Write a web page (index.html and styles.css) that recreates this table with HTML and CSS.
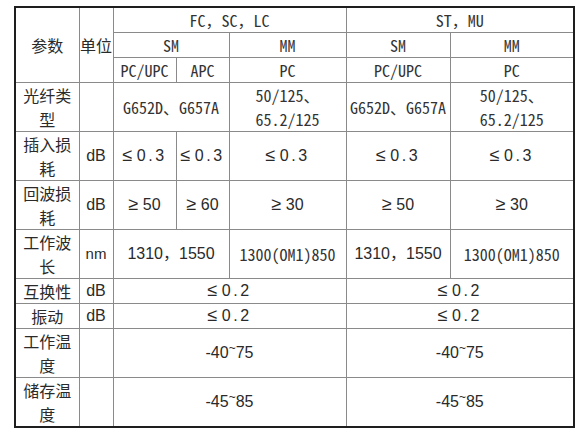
FILE: index.html
```html
<!DOCTYPE html>
<html lang="zh-CN">
<head>
<meta charset="utf-8">
<title>参数表</title>
<link rel="stylesheet" href="styles.css">
</head>
<body>
<table class="spec">
  <colgroup>
    <col class="c1"><col class="c2"><col class="c3"><col class="c4"><col class="c5"><col class="c6"><col class="c7">
  </colgroup>
  <tbody>
    <tr>
      <td rowspan="3">参数</td>
      <td rowspan="3">单位</td>
      <td colspan="3" class="mono">FC，SC，LC</td>
      <td colspan="2" class="mono">ST，MU</td>
    </tr>
    <tr>
      <td colspan="2" class="mono">SM</td>
      <td class="mono">MM</td>
      <td class="mono">SM</td>
      <td class="mono">MM</td>
    </tr>
    <tr>
      <td class="mono">PC/UPC</td>
      <td class="mono">APC</td>
      <td class="mono">PC</td>
      <td class="mono">PC/UPC</td>
      <td class="mono">PC</td>
    </tr>
    <tr>
      <td>光纤类型</td>
      <td></td>
      <td colspan="2" class="mono">G652D、G657A</td>
      <td class="mono">50/125、<br>65.2/125</td>
      <td class="mono">G652D、G657A</td>
      <td class="mono">50/125、<br>65.2/125</td>
    </tr>
    <tr>
      <td>插入损耗</td>
      <td class="num">dB</td>
      <td class="num"><span class="rel">≤</span> <span class="sp">0.3</span></td>
      <td class="num"><span class="rel">≤</span> <span class="sp">0.3</span></td>
      <td class="num"><span class="rel">≤</span> <span class="sp">0.3</span></td>
      <td class="num"><span class="rel">≤</span> <span class="sp">0.3</span></td>
      <td class="num"><span class="rel">≤</span> <span class="sp">0.3</span></td>
    </tr>
    <tr>
      <td>回波损耗</td>
      <td class="num">dB</td>
      <td class="num"><span class="rel">≥</span> 50</td>
      <td class="num"><span class="rel">≥</span> 60</td>
      <td class="num"><span class="rel">≥</span> 30</td>
      <td class="num"><span class="rel">≥</span> 50</td>
      <td class="num"><span class="rel">≥</span> 30</td>
    </tr>
    <tr>
      <td>工作波长</td>
      <td class="num small">nm</td>
      <td colspan="2" class="num">1310，1550</td>
      <td class="mono">1300(OM1)850</td>
      <td class="num">1310，1550</td>
      <td class="mono">1300(OM1)850</td>
    </tr>
    <tr>
      <td>互换性</td>
      <td class="num">dB</td>
      <td colspan="3" class="num"><span class="rel">≤</span> <span class="sp">0.2</span></td>
      <td colspan="2" class="num"><span class="rel">≤</span> <span class="sp">0.2</span></td>
    </tr>
    <tr>
      <td>振动</td>
      <td class="num">dB</td>
      <td colspan="3" class="num"><span class="rel">≤</span> <span class="sp">0.2</span></td>
      <td colspan="2" class="num"><span class="rel">≤</span> <span class="sp">0.2</span></td>
    </tr>
    <tr>
      <td>工作温度</td>
      <td></td>
      <td colspan="3" class="num">-40<span class="tilde">~</span>75</td>
      <td colspan="2" class="num">-40<span class="tilde">~</span>75</td>
    </tr>
    <tr>
      <td>储存温度</td>
      <td></td>
      <td colspan="3" class="num">-45<span class="tilde">~</span>85</td>
      <td colspan="2" class="num">-45<span class="tilde">~</span>85</td>
    </tr>
  </tbody>
</table>
</body>
</html>
```
FILE: styles.css
```css
html, body {
  margin: 0;
  padding: 0;
  background: #ffffff;
}
body {
  padding: 6px 0 0 14px;
  font-family: "Noto Sans CJK SC", sans-serif;
  font-size: 16px;
  color: #2a2a2a;
}
.spec {
  border-collapse: collapse;
  table-layout: fixed;
  width: 559px;
  border: 2px solid #1e1e1e;
}
.c1 { width: 64px; }
.c2 { width: 34px; }
.c3 { width: 63px; }
.c4 { width: 53px; }
.c5 { width: 117px; }
.c6 { width: 104px; }
.c7 { width: 124px; }
.spec td {
  border: 1px solid #8a8a8a;
  padding: 0;
  height: 24px;
  line-height: 24px;
  text-align: center;
  vertical-align: middle;
  overflow: hidden;
}
.mono {
  font-family: "Noto Sans Mono CJK SC", "Noto Sans CJK SC", monospace;
  color: #333333;
}
.num {
  font-family: "Liberation Sans", "Noto Sans CJK SC", sans-serif;
  font-size: 16px;
}
.small {
  font-size: 15px;
}
.rel {
  font-family: "DejaVu Sans", sans-serif;
  font-size: 18px;
  font-weight: 300;
  line-height: 1;
}
.sp {
  letter-spacing: 2.5px;
}
.tilde {
  display: inline-block;
  vertical-align: 6px;
  font-size: 12px;
  line-height: 1;
}
```
